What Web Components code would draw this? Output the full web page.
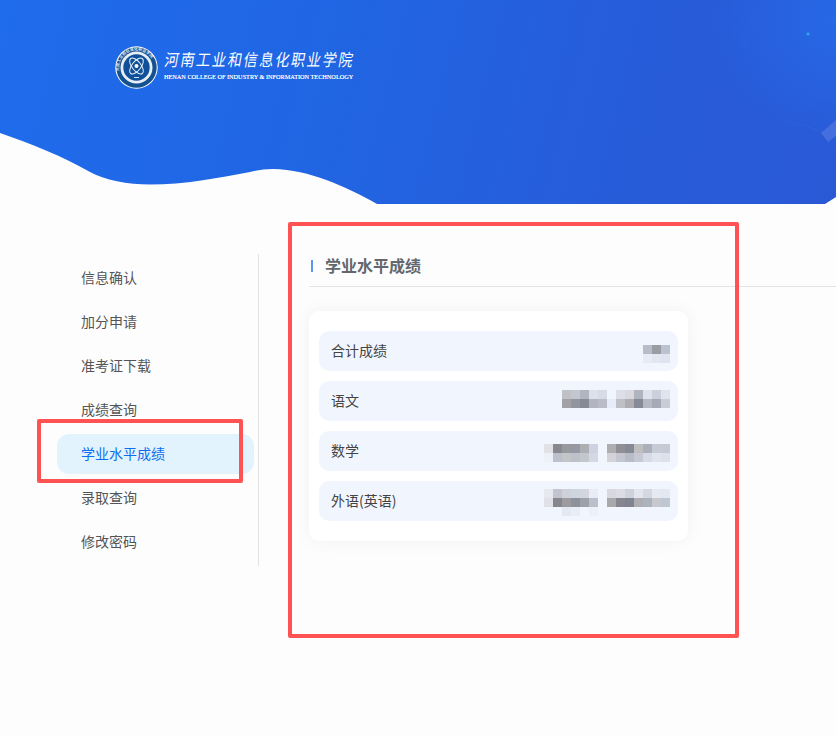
<!DOCTYPE html>
<html lang="zh-CN">
<head>
<meta charset="utf-8">
<title>学业水平成绩</title>
<style>
html,body{margin:0;padding:0;background:#fdfdfd;}
body{position:relative;width:836px;height:736px;overflow:hidden;font-family:"Noto Sans CJK SC","Liberation Sans",sans-serif;font-size:14px;color:#444;}
</style>
</head>
<body>
<site-header></site-header>
<main-area>
  <side-nav>
    <nav-item>信息确认</nav-item>
    <nav-item>加分申请</nav-item>
    <nav-item>准考证下载</nav-item>
    <nav-item>成绩查询</nav-item>
    <nav-item active>学业水平成绩</nav-item>
    <nav-item>录取查询</nav-item>
    <nav-item>修改密码</nav-item>
  </side-nav>
  <score-panel title-text="学业水平成绩">
    <score-row label="合计成绩"><pixel-mosaic style="margin-top:6px" cols="3" colors="#b8bcc8,#9a9ca4,#bcc2d0;#e6ebf6,#e2e6f0,#dfe5f0"></pixel-mosaic></score-row>
    <score-row label="语文"><pixel-mosaic style="margin-bottom:4px" cols="12" colors="#c0c1c6,#c2c6ce,#b0b5c0,#dde0ea,#d6dbe6,#f1f5fd,#dcdfe8,#d8d8de,#b0b4c0,#dfe2ec,#ccd0dc,#dfe4ee;#a2a2a6,#92949e,#868a94,#b2b5c0,#babdc8,#e6edf8,#bfc0c6,#aeaeb2,#868a96,#b6b9c4,#a6a9b6,#c8cdd8"></pixel-mosaic></score-row>
    <score-row label="数学"><pixel-mosaic style="margin-top:4px" cols="14" colors="#e2e2e6,#88898f,#98999f,#9699a3,#aeafb3,#ccd2e0,#f1f6fe,#aeaeb0,#8f8f95,#868a95,#bfbfc1,#abb0ba,#c7cbd5,#c4cbd5;#eef1f8,#bcc0ca,#c4c5c9,#bcc1ca,#c4c6ce,#d4d8e4,#f1f6fe,#d2d2d8,#c4c6d0,#b8bcc8,#c6c9d4,#d6dbe6,#e0e4ee,#dce1ec"></pixel-mosaic></score-row>
    <score-row label="外语(英语)"><pixel-mosaic style="margin-top:3px" cols="14" colors="#e8e9ef,#c2c5d0,#ced0da,#cfd6e0,#d3d5df,#e9ecf5,#f1f6fe,#d8d8de,#dcdde4,#cfd1db,#e2e4ee,#d5d8e2,#e6e9f2,#e4e8f2;#e0e1e7,#85878d,#9b9ba0,#8c919b,#9ea0aa,#b9bfcc,#f1f6fe,#a8a8ac,#858690,#808490,#aeaeb2,#adb3bd,#c8c8d0,#bfc7d2;#f1f6fe,#f1f6fe,#e4e8f2,#e8edf6,#f1f6fe,#ecf0f8,#f1f6fe,#f1f6fe,#f1f6fe,#f1f6fe,#f1f6fe,#f1f6fe,#f1f6fe,#f1f6fe"></pixel-mosaic></score-row>
  </score-panel>
</main-area>
<red-mark style="left:37px;top:419px;width:206px;height:64px"></red-mark>
<red-mark style="left:288px;top:222px;width:451px;height:416px"></red-mark>

<script>
function def(name, css, html, init){
  customElements.define(name, class extends HTMLElement{
    constructor(){
      super();
      const r=this.attachShadow({mode:'open'});
      r.innerHTML='<style>'+css+'</style>'+html;
    }
    connectedCallback(){ if(init) init(this,this.shadowRoot); }
  });
}

def('site-header',`
  :host{display:block;position:relative;height:204px;box-sizing:border-box;padding:46px 0 0 115px;overflow:hidden;}
  .bg{position:absolute;left:0;top:0;width:836px;height:204px;}
  .logo{position:relative;display:flex;align-items:flex-start;gap:6px;}
  .names{display:flex;flex-direction:column;width:191px;color:#fff;}
  .cn{font:400 14px/19px "Noto Sans CJK SC",sans-serif;white-space:nowrap;letter-spacing:1.8px;margin-left:1px;margin-top:4px;transform:skewX(-10deg) scaleY(1.2);transform-origin:0 50%;}
  .en{font:6.25px/8px "Liberation Serif",serif;white-space:nowrap;color:#eef3fd;margin-top:4px;text-shadow:0 0 .4px #fff;}
  svg.seal{display:block;flex:none;}
`,`
  <svg class="bg" viewBox="0 0 836 204" aria-hidden="true">
    <defs>
      <linearGradient id="g" x1="0" y1="0" x2="836" y2="204" gradientUnits="userSpaceOnUse">
        <stop offset="0" stop-color="#1f6cec"/>
        <stop offset=".35" stop-color="#2066e4"/>
        <stop offset=".8" stop-color="#285bd8"/>
        <stop offset="1" stop-color="#2a59d6"/>
      </linearGradient>
      <radialGradient id="h" cx="836" cy="20" r="130" gradientUnits="userSpaceOnUse">
        <stop offset="0" stop-color="#2668e6"/>
        <stop offset="1" stop-color="#2668e6" stop-opacity="0"/>
      </radialGradient>
    </defs>
    <rect width="836" height="204" fill="url(#g)"/>
    <rect x="700" width="136" height="160" fill="url(#h)"/>
    <path d="M0 133C32 144 62 156 90 172C104 180 128 184.500 150 184.500C185 184.500 218 178 250 172C258 170 265 169 273 169C310 170 345 186 378 204.500L0 204.500Z" fill="#fdfdfd"/>
    <path d="M825 204L836 197V204Z" fill="#fdfdfd"/>
    <circle cx="808" cy="34" r="1.600" fill="#2fa8ea"/>
    <path d="M740 48L744 31L749 32L748 48Z" fill="#3a68de" opacity=".12"/>
    <path d="M785 120L821 130L820 131L785 121Z" fill="#4a74e2" opacity=".22"/>
    <path d="M836 120V136L828 142L821 133Z" fill="#456fdf"/>
  </svg>
  <div class="logo">
    <svg class="seal" width="43" height="43" viewBox="0 0 43 43" aria-hidden="true">
      <circle cx="21.500" cy="21.500" r="21.200" fill="#fff"/>
      <circle cx="21.500" cy="21.500" r="20.200" fill="#14528f"/>
      <circle cx="21.500" cy="21.500" r="16" fill="#e8eef5"/>
      <circle cx="21.500" cy="21.500" r="13.200" fill="#0f5098"/>
      <path id="ring" d="M4.500 26A17.500 17.500 0 1 1 38.500 26" fill="none"/>
      <text font-family="Noto Sans CJK SC" font-size="4" font-weight="500" fill="#fff"><textPath href="#ring" startOffset="1">河南工业和信息化职业学院</textPath></text>
      <g fill="none" stroke="#e8f0fa" stroke-width="1">
        <ellipse cx="21.500" cy="20" rx="4.500" ry="9.500" transform="rotate(38 21.500 20)"/>
        <ellipse cx="21.500" cy="20" rx="4.500" ry="9.500" transform="rotate(-38 21.500 20)"/>
      </g>
      <circle cx="21.500" cy="20" r="2" fill="#fff"/>
      <rect x="19" y="31" width="5" height="1" fill="#cfe0f2"/>
    </svg>
    <div class="names">
      <div class="cn">河南工业和信息化职业学院</div>
      <div class="en">HENAN COLLEGE OF INDUSTRY &amp; INFORMATION TECHNOLOGY</div>
    </div>
  </div>
`);

def('main-area',`:host{display:flex;align-items:flex-start;padding-top:50px;}`,`<slot></slot>`);

def('side-nav',`
  :host{display:block;flex:none;width:201px;margin-left:57px;padding:2px 0;height:308px;border-right:1px solid #e2e2e4;}
`,`<slot></slot>`);

def('nav-item',`
  :host{display:flex;align-items:center;width:197px;height:44px;box-sizing:border-box;padding:0 0 2px 24px;font-size:14px;color:#555;position:relative;}
  :host([active]){color:#0b6df0;}
  :host([active])::before{content:"";position:absolute;left:0;right:0;top:2px;bottom:2px;border-radius:12px;background:#e3f3fd;}
  span{position:relative;}
`,`<span><slot></slot></span>`);

def('score-panel',`
  :host{display:block;flex:1;min-width:0;margin-left:50px;}
  h2{margin:0;display:flex;align-items:center;height:24px;padding-bottom:8px;border-bottom:1px solid #e4e4e6;font:700 16px/24px "Noto Sans CJK SC",sans-serif;color:#63676e;}
  h2::before{content:"";width:2px;height:12px;background:#5c96f2;margin:0 12px 0 2px;}
  h2 span{position:relative;top:-1px;}
  .card{box-sizing:border-box;width:379px;margin-top:24px;padding:20px 10px;display:flex;flex-direction:column;gap:10px;background:#fff;border-radius:10px;box-shadow:0 0 18px rgba(0,0,0,.05);}
`,`<h2><span></span></h2><div class="card"><slot></slot></div>`,(el,r)=>{r.querySelector('h2 span').textContent=el.getAttribute('title-text');});

def('score-row',`
  :host{display:flex;align-items:center;justify-content:space-between;height:40px;box-sizing:border-box;padding:0 8px 0 12px;background:#f1f6fe;border-radius:10px;font-size:14px;color:#444;}
  span{padding-bottom:2px;}
`,`<span></span><slot></slot>`,(el,r)=>{r.querySelector('span').textContent=el.getAttribute('label');});

def('pixel-mosaic',`
  :host{display:grid;grid-auto-rows:9px;}
  i{display:block;width:9px;height:9px;}
`,``,(el,r)=>{
  el.style.gridTemplateColumns='repeat('+el.getAttribute('cols')+',9px)';
  el.getAttribute('colors').split(/[;,]/).forEach(c=>{
    const i=document.createElement('i');i.style.background=c;r.appendChild(i);
  });
});

def('red-mark',`
  :host{position:absolute;display:block;box-sizing:border-box;border:4px solid #ff5252;border-radius:2px;pointer-events:none;}
`,``);
</script>
</body>
</html>
